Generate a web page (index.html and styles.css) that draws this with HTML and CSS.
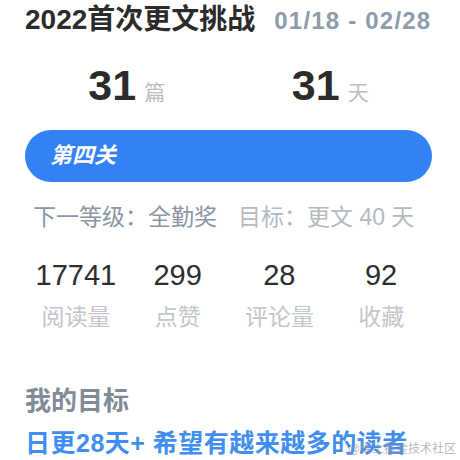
FILE: index.html
```html
<!DOCTYPE html>
<html lang="zh">
<head>
<meta charset="utf-8">
<link rel="stylesheet" href="styles.css">
</head>
<body>
<div class="page">
  <div class="title-row">
    <span class="title">2022首次更文挑战</span>
    <span class="date">01/18 - 02/28</span>
  </div>
  <div class="counts">
    <div class="count"><span class="num">31</span><span class="unit">篇</span></div>
    <div class="count"><span class="num">31</span><span class="unit">天</span></div>
  </div>
  <div class="bar"><span class="bar-text">第四关</span></div>
  <div class="level">
    <span class="next">下一等级：全勤奖</span>
    <span class="target">目标：更文 40 天</span>
  </div>
  <div class="stats">
    <div class="stat"><div class="stat-num">17741</div><div class="stat-label">阅读量</div></div>
    <div class="stat"><div class="stat-num">299</div><div class="stat-label">点赞</div></div>
    <div class="stat"><div class="stat-num">28</div><div class="stat-label">评论量</div></div>
    <div class="stat"><div class="stat-num">92</div><div class="stat-label">收藏</div></div>
  </div>
  <div class="goal-title">我的目标</div>
  <div class="goal">日更28天+ 希望有越来越多的读者</div>
</div>
<div class="watermark">@稀土掘金技术社区</div>
</body>
</html>
```
FILE: styles.css
```css
html, body {
  margin: 0;
  padding: 0;
  background: #ffffff;
}
body {
  font-family: "Liberation Sans", "Noto Sans CJK SC", sans-serif;
  width: 460px;
  height: 460px;
  overflow: hidden;
  position: relative;
}
.page {
  padding: 0 28px 0 25px;
}
.title-row {
  display: flex;
  align-items: baseline;
  gap: 19px;
  padding-top: 2px;
  height: 36px;
}
.title {
  font-size: 28px;
  font-weight: 700;
  color: #2b2b2b;
  line-height: 36px;
}
.date {
  font-size: 24px;
  font-weight: 700;
  color: #8d9bab;
  letter-spacing: 1.2px;
  line-height: 36px;
}
.counts {
  display: grid;
  grid-template-columns: 1fr 1fr;
  margin-top: 23px;
  height: 48px;
}
.count {
  display: flex;
  justify-content: center;
  align-items: baseline;
  gap: 8px;
}
.num {
  font-size: 43px;
  font-weight: 700;
  color: #2b2b2b;
  line-height: 48px;
}
.unit {
  font-size: 21px;
  color: #b9bdc3;
  line-height: 48px;
}
.bar {
  margin-top: 21px;
  height: 52px;
  border-radius: 26px;
  background: #3282f6;
  display: flex;
  align-items: center;
  padding-left: 25px;
}
.bar-text {
  color: #ffffff;
  font-size: 22px;
  font-weight: 700;
  font-style: italic;
  line-height: 30px;
}
.level {
  display: flex;
  gap: 21px;
  margin-top: 20px;
  padding-left: 8px;
  font-size: 23px;
  line-height: 30px;
}
.next {
  color: #8a96a3;
}
.target {
  color: #b5bac0;
}
.stats {
  display: grid;
  grid-template-columns: repeat(4, 1fr);
  margin-top: 25px;
}
.stat {
  text-align: center;
}
.stat-num {
  font-size: 29px;
  color: #2e2e2e;
  line-height: 36px;
}
.stat-label {
  font-size: 23px;
  color: #c3c6cb;
  line-height: 34px;
  margin-top: 7px;
}
.goal-title {
  margin-top: 50px;
  font-size: 26px;
  font-weight: 700;
  color: #808b97;
  line-height: 34px;
}
.goal {
  margin-top: 9px;
  font-size: 25px;
  font-weight: 700;
  color: #3f8ef0;
  line-height: 32px;
  letter-spacing: 0.5px;
}
.watermark {
  position: absolute;
  right: 4px;
  bottom: 4px;
  font-size: 12px;
  color: rgba(150, 150, 150, 0.7);
  line-height: 14px;
}
```
